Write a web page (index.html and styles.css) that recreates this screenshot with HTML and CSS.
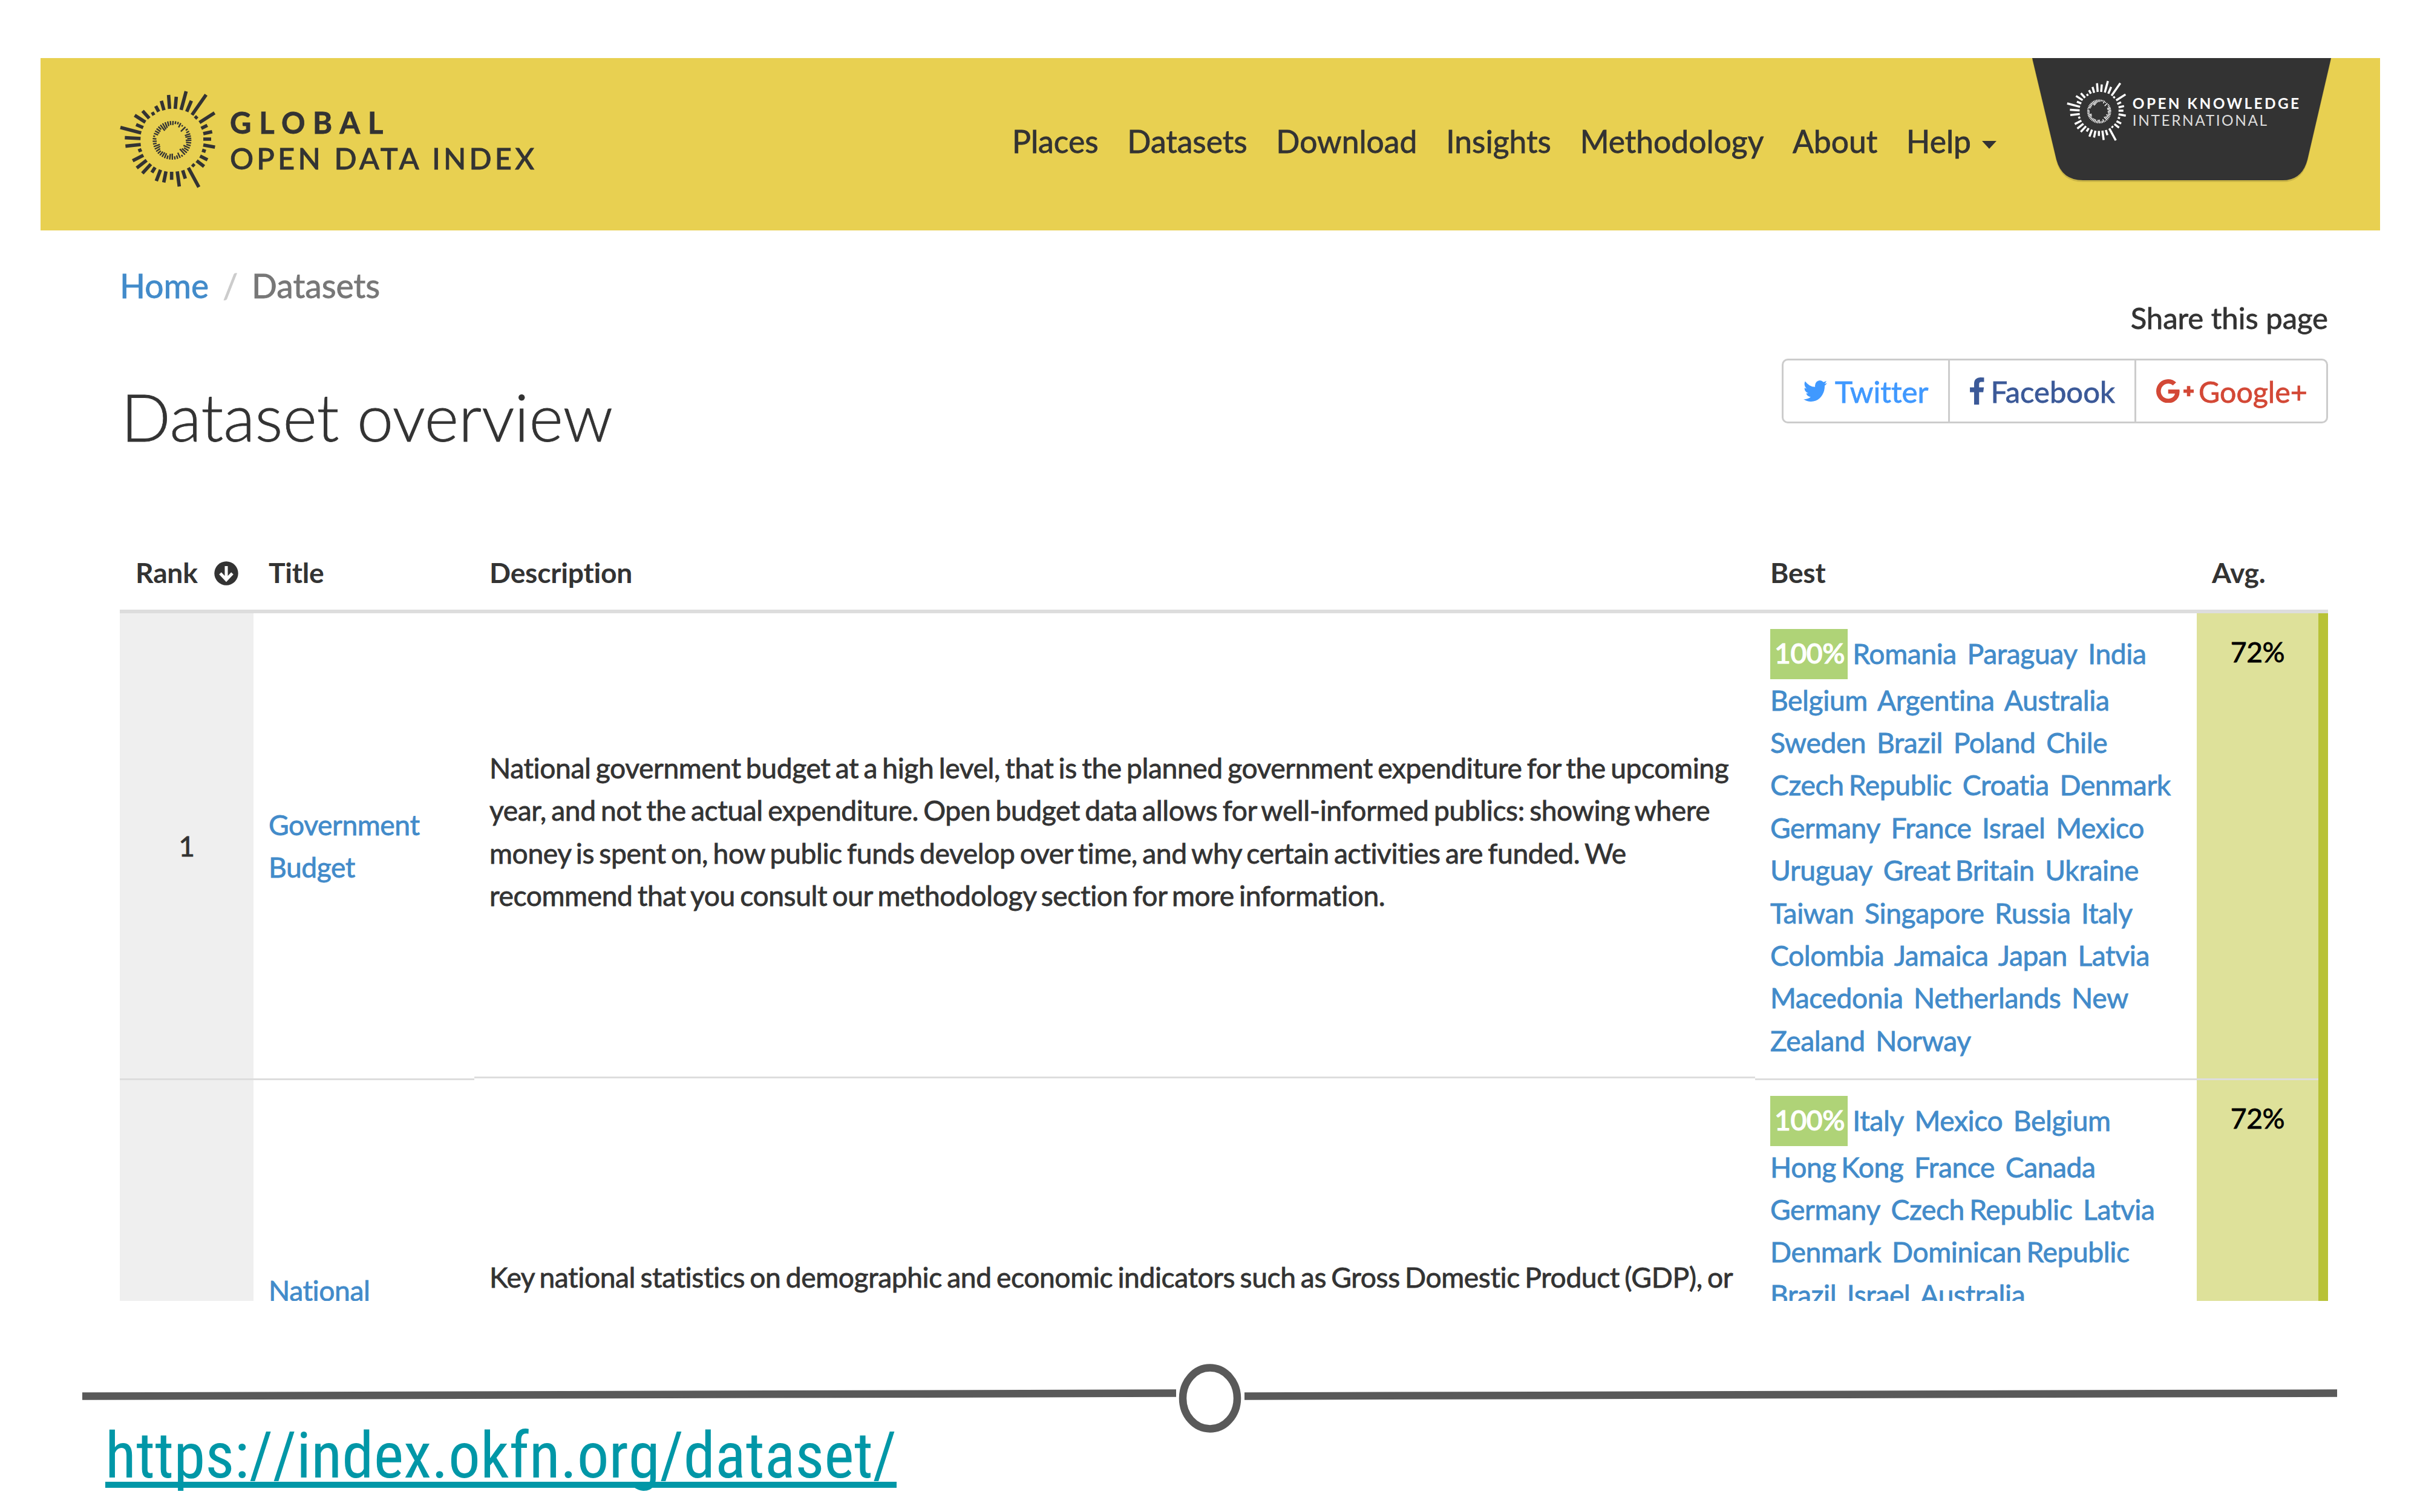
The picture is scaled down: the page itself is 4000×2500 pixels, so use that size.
FILE: index.html
```html
<!DOCTYPE html>
<html lang="en">
<head>
<meta charset="utf-8">
<title>Dataset overview - Global Open Data Index</title>
<link rel="stylesheet" href="styles.css">
</head>
<body>
<svg class="defs" aria-hidden="true">
  <symbol id="sunburst" viewBox="0 0 600 600">
    <path stroke="currentColor" stroke-width="17" d="M301 150L296 81M329 150L334 90M358 155L383 63M386 164L409 110M412 180L482 80M427 198L438 187M449 218L524 170M458 247L488 232M468 273L512 263M468 300H507M468 329L526 340M462 355L480 361M452 384L489 403M435 407L472 436M413 425L424 435M394 442L446 538M366 455L379 496M339 460L349 535M311 462V502M283 460L272 515M256 452L235 508M229 440L213 466M208 424L166 470M187 405L138 443M171 380L118 407M162 352L146 359M158 327L82 335M157 297L79 293M160 269L57 242M170 243L135 228M181 216L128 182M200 197L167 160M226 170L212 178M247 164L232 136M273 157L260 110"/>
    <g transform="translate(313 306)" stroke="currentColor" stroke-width="7">
      <path d="M96 0H68"/><path d="M96 0H70" transform="rotate(8)"/><path d="M96 0H74" transform="rotate(16)"/><path d="M96 0H62" transform="rotate(24)"/><path d="M96 0H70" transform="rotate(32)"/><path d="M96 0H64" transform="rotate(40)"/><path d="M96 0H58" transform="rotate(48)"/><path d="M96 0H86" transform="rotate(57)"/><path d="M96 0H68" transform="rotate(65)"/><path d="M96 0H78" transform="rotate(73)"/><path d="M96 0H80" transform="rotate(81)"/><path d="M96 0H66" transform="rotate(89)"/><path d="M96 0H68" transform="rotate(97)"/><path d="M96 0H78" transform="rotate(105)"/><path d="M96 0H70" transform="rotate(113)"/><path d="M96 0H70" transform="rotate(121)"/><path d="M96 0H72" transform="rotate(129)"/><path d="M96 0H76" transform="rotate(137)"/><path d="M96 0H72" transform="rotate(145)"/><path d="M96 0H66" transform="rotate(153)"/><path d="M96 0H64" transform="rotate(161)"/><path d="M96 0H78" transform="rotate(169)"/><path d="M96 0H76" transform="rotate(177)"/><path d="M96 0H78" transform="rotate(185)"/><path d="M96 0H86" transform="rotate(193)"/><path d="M96 0H74" transform="rotate(201)"/><path d="M96 0H72" transform="rotate(209)"/><path d="M96 0H72" transform="rotate(217)"/><path d="M96 0H76" transform="rotate(225)"/><path d="M96 0H60" transform="rotate(233)"/><path d="M96 0H62" transform="rotate(241)"/><path d="M96 0H66" transform="rotate(249)"/><path d="M96 0H72" transform="rotate(257)"/><path d="M96 0H76" transform="rotate(265)"/><path d="M96 0H76" transform="rotate(273)"/><path d="M96 0H82" transform="rotate(281)"/><path d="M96 0H84" transform="rotate(289)"/><path d="M96 0H72" transform="rotate(297)"/><path d="M92 0H84" transform="rotate(305)"/><path d="M94 0H62" transform="rotate(315)"/><path d="M96 0H84" transform="rotate(324)"/><path d="M96 0H80" transform="rotate(332)"/><path d="M96 0H68" transform="rotate(340)"/><path d="M96 0H68" transform="rotate(347)"/><path d="M96 0H76" transform="rotate(354)"/>
    </g>
  </symbol>
</svg>

<main class="page">
  <header class="header">
    <a class="logo">
      <svg class="logo-mark"><use href="#sunburst"/></svg>
      <span class="logo-text"><b>GLOBAL</b><span>OPEN DATA INDEX</span></span>
    </a>
    <nav class="nav">
      <a>Places</a><a>Datasets</a><a>Download</a><a>Insights</a><a>Methodology</a><a>About</a><a class="dropdown">Help<i class="caret"></i></a>
    </nav>
    <a class="okfn">
      <svg class="okfn-shape" viewBox="0 0 494 208"><path d="M0 6H494L455 174Q446 208 414 208H84Q49 208 40 174Z" fill="#a8963c" opacity=".45" transform="translate(0 -3)"/><path d="M0 0H494L455 168Q446 202 414 202H84Q49 202 40 168Z" fill="#333"/></svg>
      <svg class="okfn-mark"><use href="#sunburst"/></svg>
      <span class="okfn-text"><b>OPEN KNOWLEDGE</b><span>INTERNATIONAL</span></span>
    </a>
  </header>

  <section class="intro">
    <div>
      <div class="breadcrumb"><a>Home</a><span class="slash">/</span><span>Datasets</span></div>
      <h1>Dataset overview</h1>
    </div>
    <div class="share">
      <p>Share this page</p>
      <div class="buttons">
        <a class="twitter"><svg viewBox="108 256 1576 1280" width="39" height="35" preserveAspectRatio="none"><path fill="currentColor" d="M1684 408q-67 98-162 167 1 14 1 42 0 130-38 259.500t-115.500 248.500-184.500 210.500-258 146-323 54.500q-271 0-496-145 35 4 78 4 225 0 401-138-105-2-188-64.500t-114-159.500q33 5 61 5 43 0 85-11-112-23-185.500-111.500t-73.500-205.500v-4q68 38 146 41-66-44-105-115t-39-154q0-88 44-163 121 149 294.500 238.500t371.500 99.500q-8-38-8-74 0-134 94.500-228.500t228.500-94.500q140 0 236 102 109-21 205-78-37 115-142 178 93-10 186-50z"/></svg>Twitter</a>
        <a class="facebook"><svg viewBox="479 0 864 1664" width="23.500" height="45"><path fill="currentColor" d="M1343 12v264h-157q-86 0-116 36t-30 108v189h293l-39 296h-254v759h-306v-759h-255v-296h255v-218q0-186 104-288.500t277-102.500q147 0 228 12z"/></svg>Facebook</a>
        <a class="google"><svg viewBox="0 163 2304 1466" width="62" height="39.500"><path fill="currentColor" d="M1437 913q0 208-87 370.500t-248 254-369 91.500q-149 0-285-58t-234-156-156-234-58-285 58-285 156-234 234-156 285-58q286 0 491 192l-199 191q-117-113-292-113-123 0-227.500 62t-165.500 168.500-61 232.500 61 232.500 165.500 168.500 227.500 62q83 0 152.500-23t114.500-57.500 78.500-78.500 49-83 21.500-74h-416v-252h692q12 63 12 122zm867-122v210h-209v209h-210v-209h-209v-210h209v-209h210v209h209z"/></svg>Google+</a>
      </div>
    </div>
  </section>

  <section class="table">
    <div class="row head">
      <div class="rank">Rank<svg viewBox="0 0 40 40" width="40" height="40"><circle cx="20" cy="20" r="19.700" fill="#333"/><path d="M20 8V30M10 20L20 30.500L30 20" fill="none" stroke="#fff" stroke-width="5"/></svg></div>
      <div>Title</div><div>Description</div><div>Best</div><div>Avg.</div>
    </div>
    <div class="row first">
      <div class="num">1</div>
      <div class="title"><a>Government<br>Budget</a></div>
      <div class="desc">National government budget at a high level, that is the planned government expenditure for the upcoming<br>year, and not the actual expenditure. Open budget data allows for well-informed publics: showing where<br>money is spent on, how public funds develop over time, and why certain activities are funded. We<br>recommend that you consult our methodology section for more information.</div>
      <div class="best"><b>100%</b> <a>Romania</a> <a>Paraguay</a> <a>India</a><br><a>Belgium</a> <a>Argentina</a> <a>Australia</a><br><a>Sweden</a> <a>Brazil</a> <a>Poland</a> <a>Chile</a><br><a>Czech Republic</a> <a>Croatia</a> <a>Denmark</a><br><a>Germany</a> <a>France</a> <a>Israel</a> <a>Mexico</a><br><a>Uruguay</a> <a>Great Britain</a> <a>Ukraine</a><br><a>Taiwan</a> <a>Singapore</a> <a>Russia</a> <a>Italy</a><br><a>Colombia</a> <a>Jamaica</a> <a>Japan</a> <a>Latvia</a><br><a>Macedonia</a> <a>Netherlands</a> <a>New<br>Zealand</a> <a>Norway</a></div>
      <div class="avg">72%</div>
    </div>
    <div class="row second">
      <div class="num"></div>
      <div class="title"><a>National</a></div>
      <div class="desc">Key national statistics on demographic and economic indicators such as Gross Domestic Product (GDP), or</div>
      <div class="best"><b>100%</b> <a>Italy</a> <a>Mexico</a> <a>Belgium</a><br><a>Hong Kong</a> <a>France</a> <a>Canada</a><br><a>Germany</a> <a>Czech Republic</a> <a>Latvia</a><br><a>Denmark</a> <a>Dominican Republic</a><br><a>Brazil</a> <a>Israel</a> <a>Australia</a></div>
      <div class="avg">72%</div>
    </div>
  </section>
</main>

<footer>
  <svg class="divider" viewBox="0 0 4000 193"><g fill="none" stroke="#595959" stroke-width="12.500"><path d="M136 157.500L1944 152.500M2057 157.500L3863 152.500"/><ellipse cx="2000" cy="161" rx="45" ry="50.500"/></g></svg>
  <a class="url">https://index.okfn.org/dataset/</a>
</footer>
</body>
</html>
```
FILE: styles.css
```css
* { box-sizing: border-box; }
body {
  margin: 0;
  width: 4000px;
  height: 2500px;
  overflow: hidden;
  background: #fff;
  color: #333;
  font-family: Lato, "Liberation Sans", sans-serif;
  font-variant-ligatures: none;
}
svg { display: block; flex: none; }
.defs { width: 0; height: 0; position: absolute; }
a { color: #428bca; text-decoration: none; }

.page { width: 3867px; height: 2151px; margin-left: 67px; padding-top: 96px; overflow: hidden; -webkit-text-stroke: 0.8px; }

/* Header */
.header { display: flex; height: 284.5px; padding: 0 81px 0 113px; background: #e8d051; }
.logo { display: flex; color: #333; }
.logo-mark { width: 200px; height: 200px; margin-top: 34px; }
.logo-text { display: flex; flex-direction: column; margin: 76.5px 0 0 0; font-size: 48.8px; line-height: 59px; white-space: nowrap; }
.logo-text b { letter-spacing: 12.7px; }
.logo-text span { letter-spacing: 5.2px; font-weight: 500; }
.nav { display: flex; gap: 47.8px; margin: 106.5px 59px 0 auto; font-size: 51.6px; line-height: 60px; }
.nav a { color: #333; }
.dropdown { display: flex; }
.caret { margin: 30px 0 0 18px; height: 0; border: 12.5px solid transparent; border-top: 13px solid #333; border-bottom: 0; }
.okfn { position: relative; display: flex; width: 494px; height: 202px; padding-left: 45.8px; color: #fff; }
.okfn-shape { position: absolute; left: 0; top: 0; width: 494px; height: 208px; }
.okfn-mark { position: relative; width: 124px; height: 124px; margin-top: 25.3px; }
.okfn-text { position: relative; display: flex; flex-direction: column; margin: 61px 0 0 -4px; font-size: 24.4px; line-height: 28px; white-space: nowrap; -webkit-text-stroke: 0; }
.okfn-text b { letter-spacing: 3.4px; }
.okfn-text span { letter-spacing: 2.6px; color: #ddd; }

/* Page intro */
.intro { display: flex; justify-content: space-between; height: 499.5px; padding: 0 86px 0 131px; }
.breadcrumb { display: flex; margin: 56.5px 0 0 0; font-size: 55.2px; line-height: 70px; color: #777; }
.slash { width: 71px; text-align: center; color: #ccc; }
h1 { margin: 116px 0 0 2px; font-size: 108px; line-height: 130px; font-weight: 300; }
.share { padding-top: 114.5px; font-size: 49px; }
.share p { margin: 0 0 38px; line-height: 60px; text-align: right; }
.buttons { display: flex; width: 903px; height: 107px; border: 3px solid #ccc; border-radius: 10px; }
.buttons a { display: flex; align-items: center; padding-left: 33px; }
.buttons a + a { border-left: 3px solid #ccc; }
.buttons .twitter { width: 272px; gap: 13px; color: #4099ff; font-size: 49.3px; }
.buttons .facebook { width: 308px; gap: 11px; color: #3b5998; }
.buttons .google { flex: 1; gap: 8px; color: #d34836; font-size: 48.3px; }

/* Dataset table */
.table { margin-left: 131px; width: 3650px; font-size: 46.2px; letter-spacing: -0.4px; line-height: 70.4px; white-space: nowrap; }
.row { display: grid; grid-template-columns: 221px 365px 2117px 730px 217px; }
.head { height: 134px; padding-top: 31px; border-bottom: 6px solid #ddd; font-weight: 700; letter-spacing: -0.2px; -webkit-text-stroke: 0; }
.head > div { padding-left: 25px; }
.head .rank { display: flex; gap: 27px; padding-left: 26px; }
.rank svg { margin-top: 17px; }
.first { height: 768.5px; }
.second { height: 400px; }
.num { display: flex; align-items: center; justify-content: center; background: #efefef; }
.title { padding-left: 25px; }
.first .title { align-self: center; }
.desc { padding: 220px 0 0 25px; word-spacing: -3.1px; }
.best { padding: 26px 0 0 25px; word-spacing: -3.1px; }
.best a { margin-right: 9.3px; position: relative; top: 0.5px; }
.best b { display: inline-block; height: 83px; margin-bottom: -2px; padding: 0 5px 0 7px; background: #afd377; color: #fff; font-weight: 500; line-height: 79.5px; -webkit-text-stroke: 1.2px; }
.avg { padding-top: 28px; text-align: center; color: #000; background: #dee19a; border-right: 16px solid #b8c236; }
.second > div { box-shadow: inset 0 3px #ddd; }
.second .title { padding-top: 315px; }
.second .desc { margin-top: -3px; padding-top: 296.5px; }
.second .best { padding-top: 29.5px; }
.second .avg { padding-top: 30.5px; }

/* Divider and link */
.divider { width: 4000px; height: 193px; overflow: visible; }
.url {
  display: block;
  width: max-content;
  margin-left: 174px;
  font: 400 105.4px/126px "Roboto Condensed", Roboto, sans-serif;
  font-stretch: 75%;
  font-kerning: none;
  color: #0097a7;
  text-decoration: underline;
  text-decoration-thickness: 10px;
  text-underline-offset: 7px;
  text-decoration-skip-ink: none;
}
```
